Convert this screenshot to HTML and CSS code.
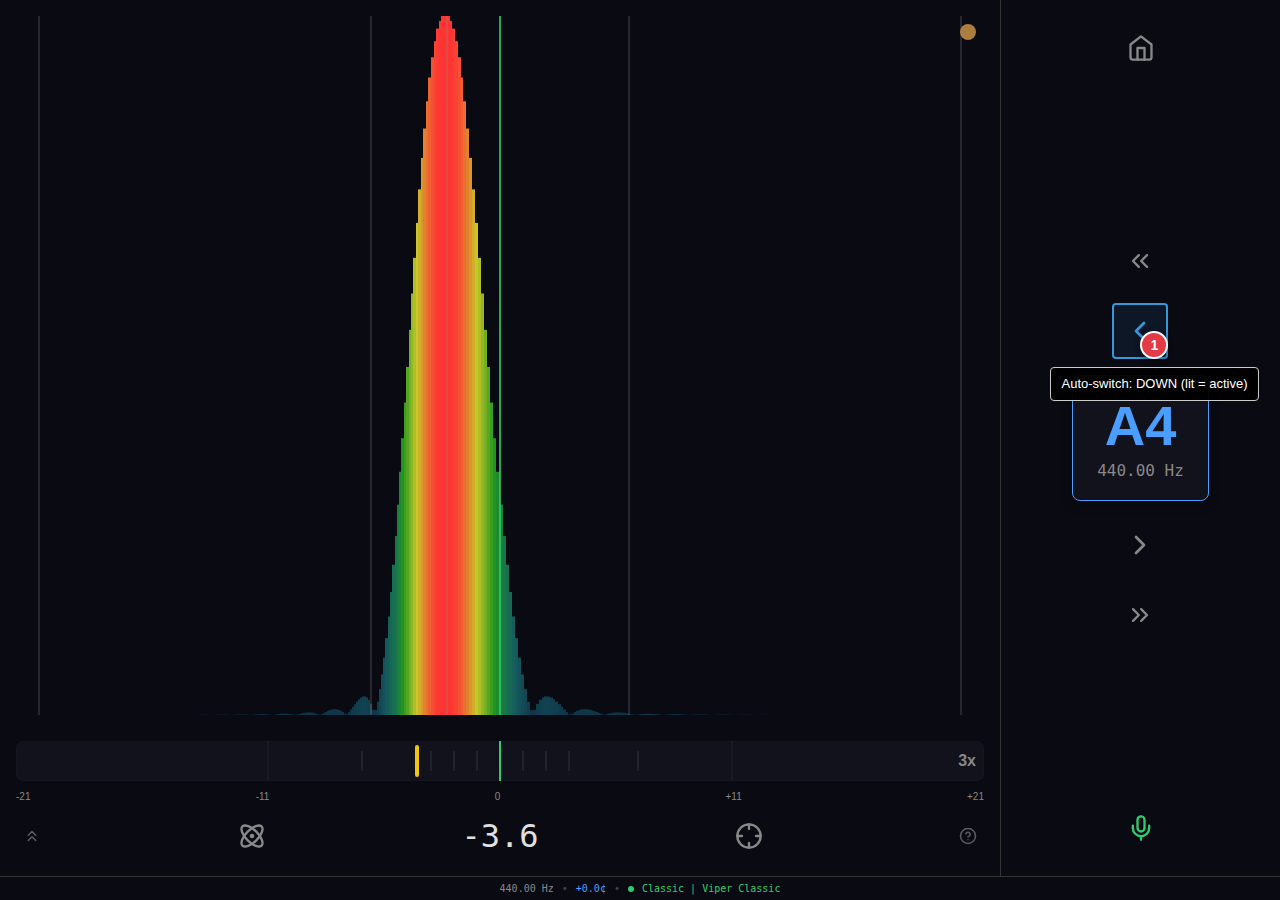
FILE: index.html
```html
<!DOCTYPE html>
<html lang="en">
<head>
  <meta charset="UTF-8">
  <meta name="viewport" content="width=device-width, initial-scale=1">
  <title>Piano Tuner</title>
  <link rel="stylesheet" href="styles.css">
</head>
<body>
<div class="app">

  <!-- Spectrum and meter -->
  <main class="tuner">
    <div class="spectrum">
      <canvas id="spectrum" aria-label="Spectrum"></canvas>
      <span class="signal-dot"></span>
    </div>

    <div class="meter">
      <svg class="meter-scale" width="100%" height="100%" aria-hidden="true">
        <g class="range-line">
          <line x1="26%" x2="26%" y1="0" y2="100%"/>
          <line x1="74%" x2="74%" y1="0" y2="100%"/>
        </g>
        <g class="tick">
          <line x1="35.7%" x2="35.7%" y1="25%" y2="75%"/>
          <line x1="42.9%" x2="42.9%" y1="25%" y2="75%"/>
          <line x1="45.2%" x2="45.2%" y1="25%" y2="75%"/>
          <line x1="47.6%" x2="47.6%" y1="25%" y2="75%"/>
          <line x1="52.4%" x2="52.4%" y1="25%" y2="75%"/>
          <line x1="54.8%" x2="54.8%" y1="25%" y2="75%"/>
          <line x1="57.1%" x2="57.1%" y1="25%" y2="75%"/>
          <line x1="64.3%" x2="64.3%" y1="25%" y2="75%"/>
        </g>
        <line class="center-line" x1="50%" x2="50%" y1="0" y2="100%"/>
      </svg>
      <span class="needle"></span>
      <span class="zoom-level">3x</span>
    </div>
    <div class="meter-labels">
      <span>-21</span><span>-11</span><span>0</span><span>+11</span><span>+21</span>
    </div>

    <div class="controls">
      <button class="btn-small" aria-label="Expand">
        <svg class="icon icon-sm" viewBox="0 0 24 24"><path d="M17 11l-5-5-5 5M17 18l-5-5-5 5"/></svg>
      </button>
      <button class="btn" aria-label="Inharmonicity">
        <svg class="icon" viewBox="0 0 24 24">
          <circle cx="12" cy="12" r="1"/>
          <path d="M20.2 20.2c2.04-2.03.02-7.36-4.5-11.9-4.54-4.52-9.87-6.54-11.9-4.5-2.04 2.03-.02 7.36 4.5 11.9 4.54 4.52 9.87 6.54 11.9 4.5Z"/>
          <path d="M15.7 15.7c4.52-4.54 6.54-9.87 4.5-11.9-2.03-2.04-7.36-.02-11.9 4.5-4.52 4.54-6.54 9.87-4.5 11.9 2.03 2.04 7.36.02 11.9-4.5Z"/>
        </svg>
      </button>
      <output class="cents">-3.6</output>
      <button class="btn" aria-label="Lock target">
        <svg class="icon" viewBox="0 0 24 24">
          <circle cx="12" cy="12" r="10"/>
          <path d="M22 12h-4M6 12H2M12 6V2M12 22v-4"/>
        </svg>
      </button>
      <button class="btn-small" aria-label="Help">
        <svg class="icon icon-sm" viewBox="0 0 24 24">
          <circle cx="12" cy="12" r="10"/>
          <path d="M9.09 9a3 3 0 0 1 5.83 1c0 2-3 3-3 3M12 17h.01"/>
        </svg>
      </button>
    </div>
  </main>

  <!-- Note navigation -->
  <aside class="sidebar">
    <button class="btn" aria-label="Home">
      <svg class="icon" viewBox="0 0 24 24"><path d="M3 9l9-7 9 7v11a2 2 0 0 1-2 2H5a2 2 0 0 1-2-2z"/><path d="M9 22V12h6v10"/></svg>
    </button>

    <nav class="note-nav">
      <button class="btn-nav" aria-label="Octave down">
        <svg class="icon" viewBox="0 0 24 24"><path d="M11 17l-5-5 5-5M18 17l-5-5 5-5"/></svg>
      </button>
      <div class="step">
        <button class="btn-step active" aria-label="Note down" aria-describedby="tip">
          <svg class="icon icon-lg" viewBox="0 0 24 24"><path d="M15 18l-6-6 6-6"/></svg>
        </button>
        <div class="badge">1<span class="tooltip" id="tip" role="tooltip">Auto-switch: DOWN (lit = active)</span></div>
      </div>
      <div class="note-card">
        <div class="note">A4</div>
        <div class="freq">440.00 Hz</div>
      </div>
      <button class="btn-step" aria-label="Note up">
        <svg class="icon icon-lg" viewBox="0 0 24 24"><path d="M9 18l6-6-6-6"/></svg>
      </button>
      <button class="btn-nav" aria-label="Octave up">
        <svg class="icon" viewBox="0 0 24 24"><path d="M13 17l5-5-5-5M6 17l5-5-5-5"/></svg>
      </button>
    </nav>

    <button class="btn mic" aria-label="Microphone">
      <svg class="icon" viewBox="0 0 24 24">
        <path d="M12 2a3 3 0 0 0-3 3v7a3 3 0 0 0 6 0V5a3 3 0 0 0-3-3Z"/>
        <path d="M19 10v2a7 7 0 0 1-14 0v-2M12 19v3"/>
      </svg>
    </button>
  </aside>
</div>

<footer class="status">
  <span>440.00 Hz</span>
  <span class="sep">•</span>
  <span class="offset">+0.0¢</span>
  <span class="sep">•</span>
  <span class="led"></span>
  <span class="profile">Classic | Viper Classic</span>
</footer>
<script src="spectrum.js"></script>
</body>
</html>
```
FILE: styles.css
```css
* {
    box-sizing: border-box;
}
body {
    margin: 0;
    height: 100vh;
    display: flex;
    flex-direction: column;
    background: #0a0a12;
    color: #888;
    font-family: "Liberation Sans", Arial, sans-serif;
}
button {
    display: flex;
    align-items: center;
    justify-content: center;
    padding: 0;
    border: 0;
    background: none;
    color: #888;
    cursor: pointer;
}
.app {
    flex: 1;
    min-height: 0;
    display: flex;
}

/* Icons */
.icon {
    width: 28px;
    height: 28px;
    fill: none;
    stroke: currentColor;
    stroke-width: 2;
    stroke-linecap: round;
    stroke-linejoin: round;
}
.icon-sm { width: 18px; height: 18px; }
.icon-lg { width: 32px; height: 32px; }

/* Tuner */
.tuner {
    flex: 1;
    min-width: 0;
    display: flex;
    flex-direction: column;
    padding: 16px;
}
.spectrum {
    position: relative;
    flex: 1;
    min-height: 0;
    margin-bottom: 26px;
}
.spectrum canvas {
    display: block;
    position: absolute;
    width: 100%;
    height: 100%;
}
.signal-dot {
    position: absolute;
    top: 8px;
    right: 8px;
    width: 16px;
    height: 16px;
    border-radius: 50%;
    background: #ad7d40;
}
.meter {
    position: relative;
    height: 40px;
    border-radius: 8px;
    background: #12121c;
    box-shadow: inset 0 0 0 1px #151520;
    overflow: hidden;
}
.meter-scale {
    display: block;
    stroke-width: 2;
    shape-rendering: crispEdges;
}
.range-line { stroke: #1a1a24; }
.tick { stroke: #22222c; }
.center-line { stroke: #2ecc71; }
.needle {
    position: absolute;
    top: 4px;
    bottom: 4px;
    left: calc(41.4% - 2px);
    width: 4px;
    border-radius: 2px;
    background: #f1c40f;
}
.zoom-level {
    position: absolute;
    right: 8px;
    top: 0;
    line-height: 40px;
    font-size: 16px;
    font-weight: bold;
}
.meter-labels {
    display: flex;
    justify-content: space-between;
    margin: 10px 0 9px;
    font-size: 10px;
    line-height: 12px;
}
.controls {
    display: flex;
    align-items: center;
    justify-content: space-between;
}
.btn { width: 48px; height: 48px; }
.btn-small {
    width: 32px;
    height: 32px;
    color: #5c5c60;
}
.cents {
    min-width: 90px;
    text-align: center;
    color: #e0e0e0;
    font-family: "DejaVu Sans Mono", monospace;
    font-size: 32px;
    line-height: 40px;
}

/* Sidebar */
.sidebar {
    width: 280px;
    display: flex;
    flex-direction: column;
    align-items: center;
    justify-content: space-between;
    padding: 24px 0;
    border-left: 1px solid #333;
}
.note-nav {
    display: flex;
    flex-direction: column;
    align-items: center;
    gap: 16px;
}
.btn-nav { width: 52px; height: 52px; }
.btn-step {
    width: 56px;
    height: 56px;
    border-radius: 4px;
}
.btn-step.active {
    border: 2px solid #3498db;
    background: rgba(52, 152, 219, 0.1);
    color: #3498db;
}
.step {
    position: relative;
    z-index: 1;
}
.badge {
    position: absolute;
    right: 0;
    bottom: 0;
    width: 28px;
    height: 28px;
    border: 2px solid #fff;
    border-radius: 50%;
    background: #e63946;
    box-shadow: 0 2px 6px rgba(0, 0, 0, 0.4);
    color: #fff;
    font-size: 14px;
    font-weight: bold;
    line-height: 24px;
    text-align: center;
}
.tooltip {
    position: absolute;
    top: 34px;
    left: 50%;
    transform: translateX(-50%);
    padding: 8px 10px;
    border: 1px solid #ccc;
    border-radius: 4px;
    background: rgba(0, 0, 0, 0.95);
    font-size: 13px;
    font-weight: normal;
    line-height: 16px;
    white-space: nowrap;
}
.note-card {
    padding: 20px 24px;
    border: 1px solid #4a9eff;
    border-radius: 8px;
    background: #12121c;
    box-shadow: 0 4px 12px rgba(0, 0, 0, 0.3);
    text-align: center;
}
.note {
    color: #4a9eff;
    font-size: 56px;
    font-weight: bold;
    line-height: 60px;
}
.freq {
    margin-top: 6px;
    font-family: "DejaVu Sans Mono", monospace;
    font-size: 16px;
    line-height: 18px;
}
.mic { color: #2ecc71; }

/* Status bar */
.status {
    display: flex;
    align-items: center;
    justify-content: center;
    gap: 8px;
    height: 24px;
    border-top: 1px solid #333;
    font-family: "DejaVu Sans Mono", monospace;
    font-size: 10px;
}
.sep { color: #444; }
.offset { color: #4a9eff; }
.led {
    width: 6px;
    height: 6px;
    border-radius: 50%;
    background: #2ecc71;
}
.profile { color: #2ecc71; }
```
FILE: spectrum.js
```js
// Half of the main lobe, from the peak outwards (0..1)
const LOBE = [
  1, 1, 0.993, 0.982, 0.964, 0.941, 0.912, 0.878, 0.839, 0.797,
  0.752, 0.704, 0.654, 0.603, 0.551, 0.498, 0.447, 0.396, 0.348, 0.301,
  0.256, 0.215, 0.176, 0.141, 0.110, 0.082, 0.058, 0.037, 0.019, 0.007
];
const PEAK = 18.62; // bars between the peak and the target

const STOPS = [
  [0, [14, 50, 70]],
  [0.03, [18, 68, 82]],
  [0.12, [20, 92, 94]],
  [0.25, [26, 116, 76]],
  [0.4, [32, 150, 30]],
  [0.7, [200, 200, 40]],
  [1, [255, 51, 51]]
];

function magnitude(k) {
  k = Math.abs(k);
  if (k < LOBE.length) return LOBE[k];
  // side lobes of the Hann window
  const d = 2 + (k - 29.3) / 14;
  return Math.abs(Math.sin(Math.PI * d) / (Math.PI * d * (1 - d * d)));
}

function color(v) {
  let i = 1;
  while (i < STOPS.length - 1 && v > STOPS[i][0]) i++;
  const [v0, a] = STOPS[i - 1];
  const [v1, b] = STOPS[i];
  const t = (v - v0) / (v1 - v0);
  return `rgb(${a.map((c, n) => Math.round(c + (b[n] - c) * t)).join(',')})`;
}

function draw() {
  const canvas = document.getElementById('spectrum');
  const w = canvas.width = canvas.clientWidth;
  const h = canvas.height = canvas.clientHeight;
  const ctx = canvas.getContext('2d');
  const mid = w / 2;
  const scale = w * 0.33;

  // log-compressed axis, widest around the target
  const xAt = k => {
    const u = k - PEAK;
    return mid + Math.sign(u) * scale * Math.log(1 + Math.abs(u) / 100);
  };

  // whole-pixel edges keep neighbouring bars free of seams
  for (let k = -145; k <= 155; k++) {
    const v = magnitude(k);
    const x = Math.round(xAt(k - 0.5));
    ctx.fillStyle = color(v);
    ctx.fillRect(x, h - v * h, Math.round(xAt(k + 0.5)) - x, v * h);
  }

  const vline = (x, style) => {
    ctx.fillStyle = style;
    ctx.fillRect(Math.round(x) - 1, 0, 2, h);
  };
  [-461, -129, 129, 461].forEach(d => vline(mid + d * w / 968, 'rgba(255,255,255,0.12)'));
  vline(xAt(0) + 2, 'rgba(130,150,110,0.25)');
  vline(mid, 'rgba(46,204,113,0.8)');
}

draw();
window.addEventListener('resize', draw);
```
